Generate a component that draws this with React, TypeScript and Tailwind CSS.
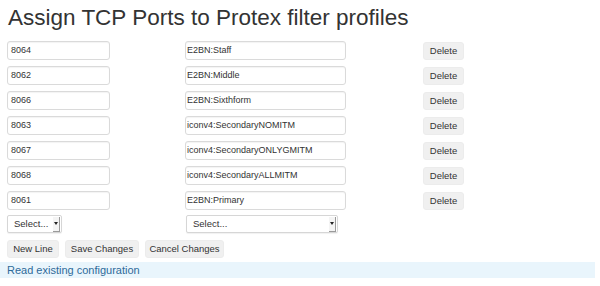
import React from "react";

const rows: [string, string][] = [
  ["8064", "E2BN:Staff"],
  ["8062", "E2BN:Middle"],
  ["8066", "E2BN:Sixthform"],
  ["8063", "iconv4:SecondaryNOMITM"],
  ["8067", "iconv4:SecondaryONLYGMITM"],
  ["8068", "iconv4:SecondaryALLMITM"],
  ["8061", "E2BN:Primary"],
];

function FakeSelect({ width }: { width: string }) {
  return (
    <div
      className={`${width} h-[18px] flex items-center justify-between border border-[#d6d6d6] rounded-[2px] bg-white shadow-[0_1px_1px_rgba(0,0,0,0.06)]`}
    >
      <span className="pl-[6px] text-[9.5px] text-[#333]">Select...</span>
      <span className="h-[15px] w-[7px] mr-[1px] bg-[#f4f4f4] border-r border-b border-[#9a9a9a] flex items-center justify-center">
        <svg width="4" height="3" viewBox="0 0 4 3">
          <path d="M0 0 L4 0 L2 3 Z" fill="#222" />
        </svg>
      </span>
    </div>
  );
}

function Btn({ label, width }: { label: string; width: string }) {
  return (
    <button
      className={`${width} h-[18px] rounded-[3px] bg-[#f0f0f0] border border-[#ececec] text-[9.5px] text-[#333] flex items-center justify-center`}
    >
      {label}
    </button>
  );
}

export default function App() {
  return (
    <div
      className="w-[600px] h-[286px] bg-white text-[#333] overflow-hidden"
      style={{ fontFamily: '"Liberation Sans", Arial, sans-serif' }}
    >
      <h1 className="pt-[6px] pl-[8px] text-[22.5px] leading-[24px] text-[#333] font-normal">
        Assign TCP Ports to Protex filter profiles
      </h1>
      <div className="mt-[11px] flex flex-col gap-[6px]">
        {rows.map(([port, profile]) => (
          <div key={port} className="flex items-center h-[19px]">
            <div className="ml-[7px] w-[103px] h-[19px] border border-[#dadada] rounded-[3px] shadow-[inset_0_1px_1px_rgba(0,0,0,0.05)] flex items-center pl-[3px] text-[9px] text-[#333]">
              {port}
            </div>
            <div className="ml-[75px] w-[161px] h-[19px] border border-[#dadada] rounded-[3px] shadow-[inset_0_1px_1px_rgba(0,0,0,0.05)] flex items-center pl-[1px] text-[9px] text-[#333]">
              {profile}
            </div>
            <div className="ml-[77px] mt-[1px]">
              <Btn label="Delete" width="w-[41px]" />
            </div>
          </div>
        ))}
      </div>
      <div className="mt-[5px] flex items-center">
        <div className="ml-[7px]">
          <FakeSelect width="w-[55px]" />
        </div>
        <div className="ml-[124px]">
          <FakeSelect width="w-[152px]" />
        </div>
      </div>
      <div className="mt-[7px] ml-[7px] flex gap-[6px]">
        <Btn label="New Line" width="w-[52px]" />
        <Btn label="Save Changes" width="w-[74px]" />
        <Btn label="Cancel Changes" width="w-[79px]" />
      </div>
      <div className="mt-[4px] mr-[5px] h-[16px] bg-[#e9f5fc] flex items-center pl-[7px] text-[11px] text-[#2d6a9a]">
        Read existing configuration
      </div>
    </div>
  );
}
